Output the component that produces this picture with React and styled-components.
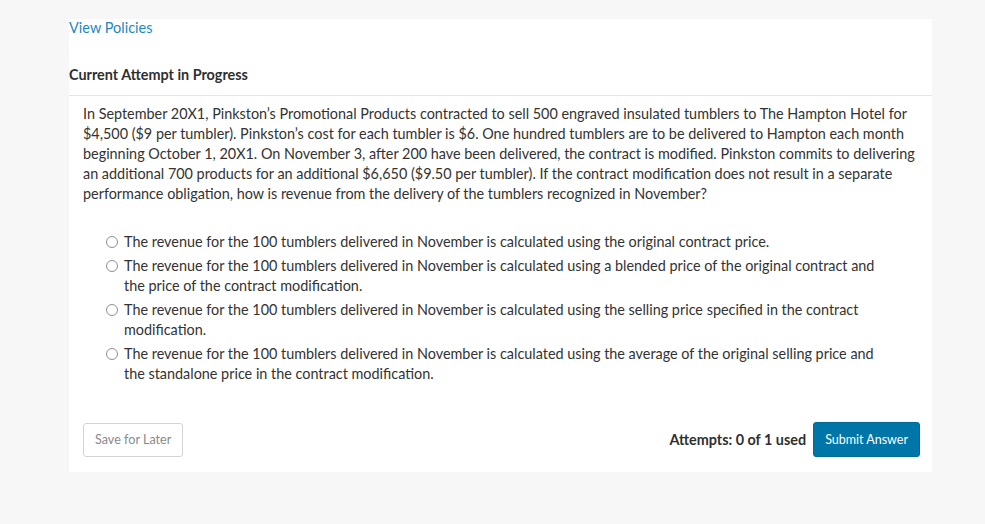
import React from 'react';
import styled, { createGlobalStyle } from 'styled-components';

const GlobalStyle = createGlobalStyle`
  html, body {
    margin: 0;
    padding: 0;
    background: #f7f7f7;
    font-family: Lato, "Open Sans", Arial, sans-serif;
    color: #333;
  }
`;

const Page = styled.div`
  padding: 19px 0 52px 69px;
`;

const Panel = styled.div`
  width: 863px;
  background: #fff;
  padding-bottom: 15px;
`;

const PolicyLink = styled.a`
  display: block;
  font-size: 14.5px;
  line-height: 18px;
  color: #1f87c0;
  text-decoration: none;
`;

const AttemptHeader = styled.h2`
  margin: 0;
  padding: 29px 0 11px;
  font-size: 14.4px;
  line-height: 18px;
  font-weight: 700;
  color: #2f2f2f;
  border-bottom: 1px solid #e6e6e6;
`;

const QuestionText = styled.p`
  margin: 0;
  padding: 8px 14px 0;
  font-size: 14.4px;
  line-height: 20px;
  color: #333;
`;

const OptionList = styled.div`
  display: flex;
  flex-direction: column;
  gap: 4px;
  padding: 28px 37px 0 37px;
`;

const Option = styled.label`
  display: flex;
  align-items: flex-start;
  gap: 6px;
  font-size: 14.4px;
  line-height: 20px;
  color: #333;
  cursor: pointer;
`;

const Radio = styled.span`
  flex: none;
  width: 10px;
  height: 10px;
  margin-top: 4px;
  border: 1px solid #8f8f8f;
  border-radius: 50%;
  background: #fff;
`;

const Footer = styled.div`
  display: flex;
  align-items: center;
  justify-content: space-between;
  padding: 38px 12px 0 14px;
`;

const SaveButton = styled.button`
  height: 34px;
  padding: 0 11px;
  font-family: inherit;
  font-size: 12.6px;
  color: #8a8a8a;
  background: #fff;
  border: 1px solid #d4d4d4;
  border-radius: 3px;
`;

const SubmitGroup = styled.div`
  display: flex;
  align-items: center;
  gap: 7px;
`;

const Attempts = styled.span`
  font-size: 14.4px;
  font-weight: 700;
  color: #2f2f2f;
`;

const SubmitButton = styled.button`
  height: 35px;
  padding: 0 11px;
  font-family: inherit;
  font-size: 12.5px;
  color: #fff;
  background: #0075a8;
  border: 1px solid #006a99;
  border-radius: 3px;
`;

const options = [
  'The revenue for the 100 tumblers delivered in November is calculated using the original contract price.',
  'The revenue for the 100 tumblers delivered in November is calculated using a blended price of the original contract and the price of the contract modification.',
  'The revenue for the 100 tumblers delivered in November is calculated using the selling price specified in the contract modification.',
  'The revenue for the 100 tumblers delivered in November is calculated using the average of the original selling price and the standalone price in the contract modification.',
];

export default function App() {
  return (
    <>
      <GlobalStyle />
      <Page>
        <Panel>
          <PolicyLink href="#">View Policies</PolicyLink>
          <AttemptHeader>Current Attempt in Progress</AttemptHeader>
          <QuestionText>
            In September 20X1, Pinkston’s Promotional Products contracted to sell 500 engraved insulated tumblers to The Hampton Hotel for $4,500 ($9 per tumbler). Pinkston’s cost for each tumbler is $6. One hundred tumblers are to be delivered to Hampton each month beginning October 1, 20X1. On November 3, after 200 have been delivered, the contract is modified. Pinkston commits to delivering an additional 700 products for an additional $6,650 ($9.50 per tumbler). If the contract modification does not result in a separate performance obligation, how is revenue from the delivery of the tumblers recognized in November?
          </QuestionText>
          <OptionList>
            {options.map((text, i) => (
              <Option key={i}>
                <Radio />
                <span>{text}</span>
              </Option>
            ))}
          </OptionList>
          <Footer>
            <SaveButton>Save for Later</SaveButton>
            <SubmitGroup>
              <Attempts>Attempts: 0 of 1 used</Attempts>
              <SubmitButton>Submit Answer</SubmitButton>
            </SubmitGroup>
          </Footer>
        </Panel>
      </Page>
    </>
  );
}
